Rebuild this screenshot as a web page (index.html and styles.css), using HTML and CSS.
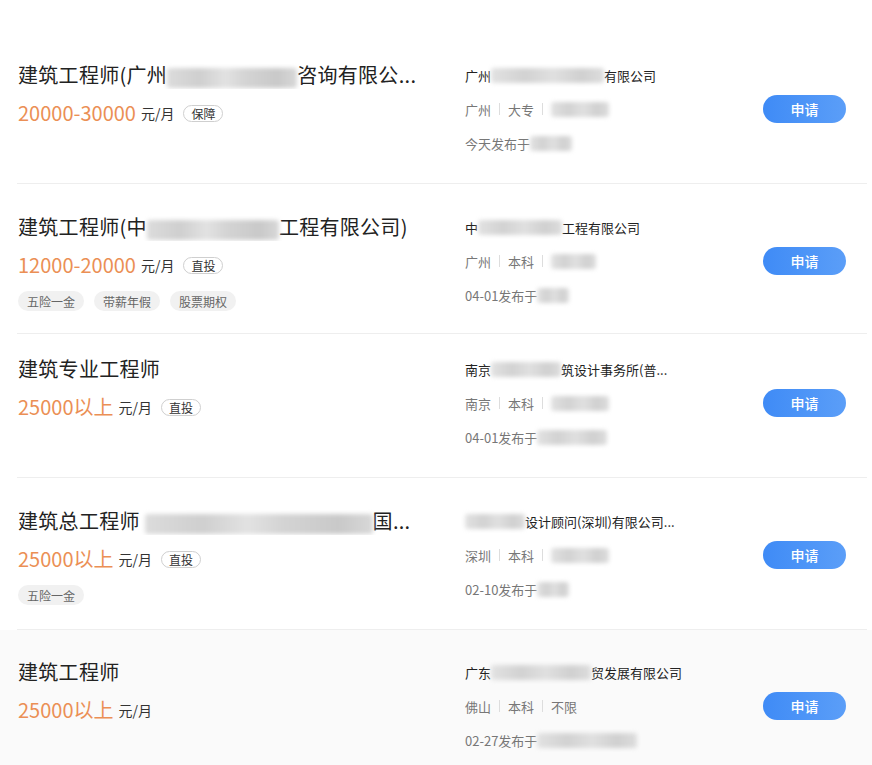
FILE: index.html
```html
<!DOCTYPE html>
<html lang="zh-CN">
<head>
<meta charset="utf-8">
<title>职位列表</title>
<link rel="stylesheet" href="styles.css">
</head>
<body>
<ul class="job-list">
  <li class="job">
    <div class="job-inner">
      <div class="job-main">
        <div class="job-title">建筑工程师(广州<span class="blur blur-title w130"></span>咨询有限公...</div>
        <div class="job-salary"><span class="salary">20000-30000</span><span class="unit">元/月</span><span class="badge">保障</span></div>
      </div>
      <div class="job-company">
        <div class="company-name">广州<span class="blur blur-sm w113"></span>有限公司</div>
        <div class="company-meta">广州<i class="sep"></i>大专<i class="sep"></i><span class="blur blur-sm w58"></span></div>
        <div class="company-date">今天发布于<span class="blur blur-sm w42"></span></div>
      </div>
      <button class="apply">申请</button>
    </div>
  </li>
  <li class="job">
    <div class="job-inner job-inner--short">
      <div class="job-main">
        <div class="job-title">建筑工程师(中<span class="blur blur-title w132"></span>工程有限公司)</div>
        <div class="job-salary"><span class="salary">12000-20000</span><span class="unit">元/月</span><span class="badge">直投</span></div>
        <div class="job-tags"><span class="tag">五险一金</span><span class="tag">带薪年假</span><span class="tag">股票期权</span></div>
      </div>
      <div class="job-company">
        <div class="company-name">中<span class="blur blur-sm w84"></span>工程有限公司</div>
        <div class="company-meta">广州<i class="sep"></i>本科<i class="sep"></i><span class="blur blur-sm w45"></span></div>
        <div class="company-date">04-01发布于<span class="blur blur-sm w32"></span></div>
      </div>
      <button class="apply">申请</button>
    </div>
  </li>
  <li class="job">
    <div class="job-inner job-inner--tight">
      <div class="job-main">
        <div class="job-title">建筑专业工程师</div>
        <div class="job-salary"><span class="salary">25000以上</span><span class="unit">元/月</span><span class="badge">直投</span></div>
      </div>
      <div class="job-company">
        <div class="company-name">南京<span class="blur blur-sm w70"></span>筑设计事务所(普...</div>
        <div class="company-meta">南京<i class="sep"></i>本科<i class="sep"></i><span class="blur blur-sm w58"></span></div>
        <div class="company-date">04-01发布于<span class="blur blur-sm w70"></span></div>
      </div>
      <button class="apply">申请</button>
    </div>
  </li>
  <li class="job">
    <div class="job-inner">
      <div class="job-main">
        <div class="job-title">建筑总工程师 <span class="blur blur-title w228"></span>国...</div>
        <div class="job-salary"><span class="salary">25000以上</span><span class="unit">元/月</span><span class="badge">直投</span></div>
        <div class="job-tags"><span class="tag">五险一金</span></div>
      </div>
      <div class="job-company">
        <div class="company-name"><span class="blur blur-sm w60"></span>设计顾问(深圳)有限公司...</div>
        <div class="company-meta">深圳<i class="sep"></i>本科<i class="sep"></i><span class="blur blur-sm w58"></span></div>
        <div class="company-date">02-10发布于<span class="blur blur-sm w32"></span></div>
      </div>
      <button class="apply">申请</button>
    </div>
  </li>
  <li class="job job--active">
    <div class="job-inner job-inner--last">
      <div class="job-main">
        <div class="job-title">建筑工程师</div>
        <div class="job-salary"><span class="salary">25000以上</span><span class="unit">元/月</span></div>
      </div>
      <div class="job-company">
        <div class="company-name">广东<span class="blur blur-sm w100"></span>贸发展有限公司</div>
        <div class="company-meta">佛山<i class="sep"></i>本科<i class="sep"></i>不限</div>
        <div class="company-date">02-27发布于<span class="blur blur-sm w100"></span></div>
      </div>
      <button class="apply">申请</button>
    </div>
  </li>
</ul>
</body>
</html>
```

FILE: styles.css
```css
* {
  box-sizing: border-box;
}

html, body {
  margin: 0;
  padding: 0;
  background: #ffffff;
}

body {
  font-family: "Noto Sans CJK SC", "Noto Sans", "Liberation Sans", sans-serif;
  color: #333333;
  overflow: hidden;
}

.job-list {
  list-style: none;
  margin: 32px 0 0 0;
  padding: 0;
}

.job {
  margin: 0;
  padding: 0;
}

.job--active {
  background: #fafafa;
}

.job-inner {
  display: flex;
  align-items: flex-start;
  margin: 0 5px 0 17px;
  padding: 29px 0 0 1px;
  height: 152px;
  border-bottom: 1px solid #eeeeee;
}

.job-inner--short {
  height: 150px;
}

.job-inner--tight {
  height: 144px;
  padding-top: 21px;
}

.job-inner--last {
  border-bottom: none;
  height: 140px;
  padding-top: 28px;
}

.job-main {
  width: 405px;
  margin-right: 42px;
  flex-shrink: 0;
}

.job-title {
  font-size: 20px;
  line-height: 28px;
  color: #222222;
  white-space: nowrap;
  overflow: hidden;
  letter-spacing: 0.3px;
}

.job-salary {
  display: flex;
  align-items: center;
  margin-top: 12px;
  height: 24px;
}

.salary {
  font-size: 20px;
  line-height: 24px;
  color: #eb8f55;
}

.unit {
  font-size: 14px;
  color: #333333;
  margin-left: 5px;
}

.badge {
  display: inline-flex;
  align-items: center;
  height: 17px;
  padding: 0 7px;
  margin-left: 9px;
  border: 1px solid #cfcfcf;
  border-radius: 9px;
  font-size: 12px;
  color: #333333;
}

.job-tags {
  display: flex;
  gap: 10px;
  margin-top: 14px;
}

.tag {
  display: inline-flex;
  align-items: center;
  height: 20px;
  padding: 0 9px;
  border-radius: 10px;
  background: #f1f1f1;
  font-size: 12px;
  color: #666666;
}

.job-company {
  width: 230px;
  margin-top: 4px;
  display: flex;
  flex-direction: column;
  gap: 14px;
}

.company-name,
.company-meta,
.company-date {
  display: flex;
  align-items: center;
  height: 20px;
  font-size: 13px;
  white-space: nowrap;
}

.company-name {
  color: #222222;
}

.company-meta,
.company-date {
  color: #777777;
}

.sep {
  display: inline-block;
  width: 1px;
  height: 12px;
  background: #dddddd;
  margin: 0 8px;
}

.apply {
  margin: 34px 21px 0 auto;
  width: 83px;
  height: 28px;
  border: none;
  border-radius: 14px;
  background: linear-gradient(90deg, #3f8bf6, #5b9ef8);
  color: #ffffff;
  font-family: inherit;
  font-size: 14px;
  font-weight: 500;
  cursor: pointer;
  padding: 0;
}

.blur {
  display: inline-block;
  vertical-align: middle;
  filter: blur(2px);
  border-radius: 3px;
}

.blur-title {
  height: 20px;
  background: linear-gradient(90deg, #dcdcdc 0%, #cfcfcf 25%, #e2e2e2 45%, #d4d4d4 60%, #c9c9c9 85%, #d8d8d8 100%);
}

.blur-sm {
  height: 15px;
  background: linear-gradient(90deg, #e2e2e2 0%, #d2d2d2 30%, #e0e0e0 55%, #d0d0d0 80%, #dddddd 100%);
}

.w32 { width: 32px; }
.w42 { width: 42px; }
.w45 { width: 45px; }
.w58 { width: 58px; }
.w60 { width: 60px; }
.w70 { width: 70px; }
.w84 { width: 84px; }
.w100 { width: 100px; }
.w113 { width: 113px; }
.w130 { width: 130px; }
.w132 { width: 132px; }
.w228 { width: 228px; }
```
